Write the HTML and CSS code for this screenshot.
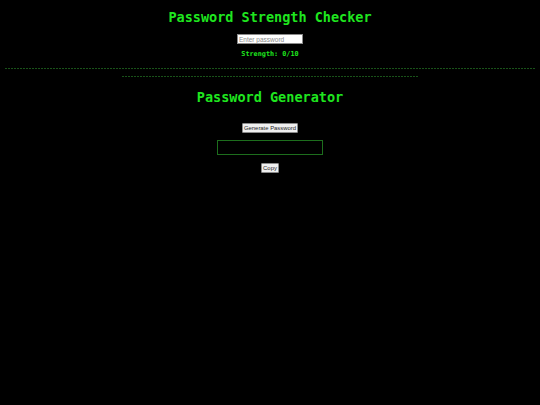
FILE: index.html
```html
<!DOCTYPE html>
<html lang="en">
<head>
<meta charset="utf-8">
<title>Password Tools</title>
<link rel="stylesheet" href="styles.css">
</head>
<body>
  <section class="checker">
    <h1 class="title">Password Strength Checker</h1>
    <input class="pw-input" type="text" placeholder="Enter password">
    <p class="strength">Strength: 0/10</p>
  </section>
  <div class="divider"></div>
  <section class="generator">
    <h2 class="title">Password Generator</h2>
    <button class="btn" type="button">Generate Password</button>
    <div class="output"></div>
    <button class="btn" type="button">Copy</button>
  </section>
</body>
</html>
```

FILE: styles.css
```css
html, body {
  margin: 0;
  padding: 0;
  background: #000;
}
body {
  font-family: "DejaVu Sans Mono", monospace;
  color: #1fe61f;
  text-align: center;
  min-height: 405px;
}
.checker {
  display: flex;
  flex-direction: column;
  align-items: center;
  padding-top: 9px;
}
.title {
  margin: 0;
  font-size: 13.5px;
  line-height: 16px;
  font-weight: bold;
}
.pw-input {
  box-sizing: border-box;
  margin: 9px 0 0;
  width: 66px;
  height: 10px;
  padding: 0 1px;
  border: 1px solid #8a8a8a;
  background: #fff;
  font-family: "Liberation Sans", Arial, sans-serif;
  font-size: 6.5px;
  outline: none;
}
.pw-input::placeholder {
  color: #8a8a8a;
}
.strength {
  margin: 6px 0 0;
  font-size: 6.8px;
  line-height: 8px;
  font-weight: bold;
}
.divider {
  margin: 10px 5px 0;
  height: 1px;
  background: repeating-linear-gradient(to right, #195219 0 2px, transparent 2px 3px);
}
.generator {
  width: 296px;
  margin: 7px auto 0;
  padding-top: 13px;
  display: flex;
  flex-direction: column;
  align-items: center;
  background: repeating-linear-gradient(to right, #195219 0 2px, transparent 2px 3px) top left / 100% 1px no-repeat;
}
.btn {
  box-sizing: border-box;
  height: 10px;
  margin: 0;
  padding: 0 1px;
  border: 1px solid #8a8a8a;
  border-radius: 1px;
  background: #efefef;
  color: #222;
  font-family: "Liberation Sans", Arial, sans-serif;
  font-size: 5.9px;
  line-height: 8px;
}
.generator .btn:first-of-type {
  margin-top: 18px;
}
.output {
  box-sizing: border-box;
  width: 106px;
  height: 15px;
  margin: 7px 0 8px;
  border: 1px solid #1d6e1d;
  background: #000;
}
```
